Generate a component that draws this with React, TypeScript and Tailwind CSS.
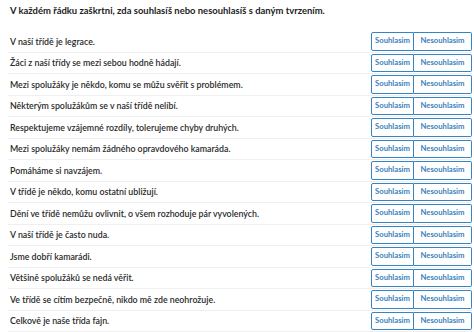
import React from "react";

const rows = [
  "V naší třídě je legrace.",
  "Žáci z naší třídy se mezi sebou hodně hádají.",
  "Mezi spolužáky je někdo, komu se můžu svěřit s problémem.",
  "Některým spolužákům se v naší třídě nelíbí.",
  "Respektujeme vzájemné rozdíly, tolerujeme chyby druhých.",
  "Mezi spolužáky nemám žádného opravdového kamaráda.",
  "Pomáháme si navzájem.",
  "V třídě je někdo, komu ostatní ubližují.",
  "Dění ve třídě nemůžu ovlivnit, o všem rozhoduje pár vyvolených.",
  "V naší třídě je často nuda.",
  "Jsme dobří kamarádi.",
  "Většině spolužáků se nedá věřit.",
  "Ve třídě se cítím bezpečně, nikdo mě zde neohrožuje.",
  "Celkově je naše třída fajn.",
];

export default function App() {
  return (
    <div
      className="w-[474px] h-[332px] bg-white overflow-hidden text-[#212529]"
      style={{ fontFamily: 'Lato, "Open Sans", sans-serif' }}
    >
      <div className="pl-[10px] pt-[4px] h-[31px] text-[9.45px] font-bold leading-[14px] text-[#222]">
        V každém řádku zaškrtni, zda souhlasíš nebo nesouhlasíš s daným tvrzením.
      </div>
      <div className="pl-[8px] pr-[2px]">
        {rows.map((r, i) => (
          <div
            key={i}
            className="h-[21.5px] flex items-center justify-between border-b border-[#efefef]"
          >
            <span className="pl-[2px] text-[8.8px] font-semibold text-[#2a2a2a]">{r}</span>
            <div className="flex h-[18.5px]">
              <button className="w-[43px] h-full border border-[#3585c6] rounded-l-[2px] text-[7.7px] font-bold text-[#3a7fbc] bg-white">
                Souhlasim
              </button>
              <button className="w-[58px] h-full border border-l-0 border-[#3585c6] rounded-r-[2px] text-[7.7px] font-bold text-[#3a7fbc] bg-white">
                Nesouhlasim
              </button>
            </div>
          </div>
        ))}
      </div>
    </div>
  );
}
